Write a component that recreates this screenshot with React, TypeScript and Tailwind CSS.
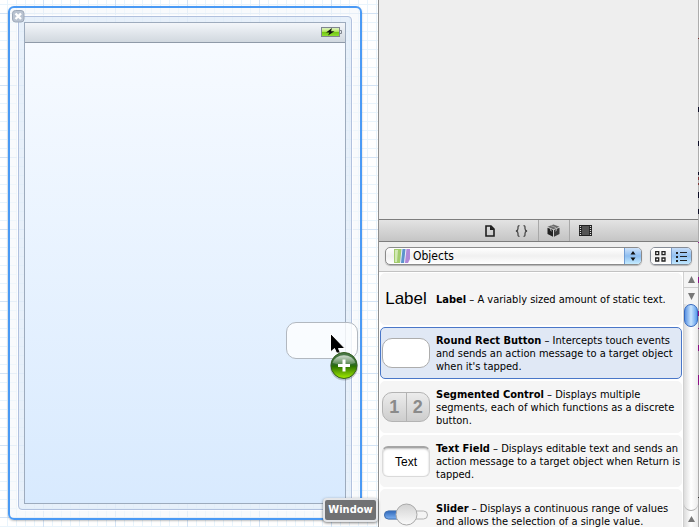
import React from "react";

const font = "font-['DejaVu_Sans_Condensed','DejaVu_Sans',sans-serif]";
const helvetica = "font-['Liberation_Sans',Arial,sans-serif]";

function Battery() {
  return (
    <svg width="21" height="10" viewBox="0 0 21 10" aria-label="Battery charging">
      <defs>
        <linearGradient id="bat" x1="0" y1="0" x2="0" y2="1">
          <stop offset="0" stopColor="#d9f5a8" />
          <stop offset="0.45" stopColor="#a5e04c" />
          <stop offset="0.5" stopColor="#74c913" />
          <stop offset="1" stopColor="#8fdd32" />
        </linearGradient>
      </defs>
      <rect x="0.5" y="0.5" width="18" height="9" fill="#d5edb4" stroke="#80868f" />
      <rect x="1" y="2" width="17" height="7" fill="url(#bat)" />
      <path d="M19 3.500h1.500v3h-1.500" fill="none" stroke="#80868f" />
      <path d="M11 1L5 5.500h3.500L7 8.500l6.500-4.200H10z" fill="#111" />
    </svg>
  );
}

function CloseBadge() {
  return (
    <svg width="13" height="13" viewBox="0 0 13 13">
      <rect x="0.5" y="0.5" width="11.5" height="11.5" rx="3" fill="#b9c3d1" stroke="#9da8b8" />
      <path d="M3.500 3.500l5.500 5.500M9 3.500l-5.500 5.500" stroke="#fff" strokeWidth="2.400" />
    </svg>
  );
}

function Cursor() {
  return (
    <svg width="18" height="21" viewBox="0 0 18 21">
      <path d="M1.500 0.500v18.500l4-3.500 2 4.500h4l-2-4.500h6.500z" fill="#000" stroke="#fff" strokeWidth="1" />
    </svg>
  );
}

function PlusBadge() {
  return (
    <svg width="30" height="30" viewBox="0 0 30 30">
      <defs>
        <linearGradient id="plus" x1="0" y1="0" x2="0" y2="1">
          <stop offset="0" stopColor="#4c7a4c" />
          <stop offset="0.48" stopColor="#2d6a22" />
          <stop offset="0.52" stopColor="#2a7000" />
          <stop offset="1" stopColor="#a4ee00" />
        </linearGradient>
        <linearGradient id="gloss" x1="0" y1="0" x2="0" y2="1">
          <stop offset="0" stopColor="#fff" stopOpacity="0.750" />
          <stop offset="1" stopColor="#fff" stopOpacity="0.150" />
        </linearGradient>
      </defs>
      <circle cx="15" cy="15.500" r="14" fill="#000" opacity="0.200" />
      <circle cx="15" cy="14.500" r="13" fill="url(#plus)" stroke="#35601f" />
      <path d="M3.500 12a12 11 0 0 1 23 0q-11.500 4-23 0z" fill="url(#gloss)" />
      <path d="M15 8.500v12M9 14.500h12" stroke="#fff" strokeWidth="3" />
    </svg>
  );
}

function Canvas() {
  return (
    <main className="relative flex min-w-0 flex-1 bg-white bg-[linear-gradient(to_right,#d3e3f5_1px,transparent_1px),linear-gradient(to_bottom,#d3e3f5_1px,transparent_1px),linear-gradient(to_right,#e9f4fc_1px,transparent_1px),linear-gradient(to_bottom,#e9f4fc_1px,transparent_1px)] bg-size-[72px_72px,72px_72px,9px_9px,9px_9px] bg-position-[43px_0,0_13px,7px_0,0_4px] pt-1.5 pr-4 pb-[7px] pl-2">
      <div className="relative flex flex-1 rounded-md border-2 border-[#4a9af5] bg-[#f4f6fa]/60 p-2 shadow-[0_1px_2px_rgba(0,0,0,0.25)]">
        <div className="flex flex-1 rounded border border-[#b1c1de] bg-[#d6e5f7]/50 p-[5px] shadow-[0_0_0_1px_rgba(255,255,255,0.8)]">
          <section
            aria-label="Window preview"
            className="flex flex-1 flex-col border border-[#9dabbd] bg-linear-to-b from-[#f8fbff] to-[#d8eafe]"
          >
            <header className="flex h-5 items-center justify-end border-b border-[#8f9aa8] bg-linear-to-b from-[#f3f6fa] to-[#d1d8df] pr-[3px] pb-px">
              <Battery />
            </header>
          </section>
        </div>
        <div className="absolute top-0.5 left-0.5">
          <CloseBadge />
        </div>
      </div>
      <div className="absolute top-[322px] left-[286px] h-[37px] w-[72px] rounded-[10px] border border-[#b2b8c0] bg-white/80" />
      <div className="absolute top-[333px] left-[329px]">
        <Cursor />
      </div>
      <div className="absolute top-[351px] left-[329px]">
        <PlusBadge />
      </div>
      <div className="absolute right-0 bottom-[5px] flex h-6 w-[55px] items-center justify-center rounded border-2 border-[#e4e6e9] bg-[#707173] text-[11px] font-bold text-white shadow-[0_1px_3px_rgba(0,0,0,0.5)]">
        Window
      </div>
    </main>
  );
}

function LibraryTabs() {
  return (
    <nav aria-label="Libraries" className="flex h-[23px] shrink-0 items-stretch justify-center border-y border-[#7d7d7d] bg-linear-to-b from-[#e3e3e3] to-[#c5c5c5] pr-0.5">
      <button aria-label="File templates" className="grid w-8 place-items-center">
        <svg width="10" height="12" viewBox="0 0 10 12">
          <path d="M1 1h5l3 3v7H1z" fill="none" stroke="#1e1e1e" strokeWidth="1.600" />
          <path d="M5 .5L9.500 5H5z" fill="#1e1e1e" />
        </svg>
      </button>
      <button aria-label="Code snippets" className="grid w-8 place-items-center">
        <svg width="13" height="12" viewBox="0 0 13 12" fill="none" stroke="#4a4a4a" strokeWidth="1.300">
          <path d="M4.500.7C2.800.7 3 1.700 3 3.500S2.600 5.700 1 6c1.600.3 2 .7 2 2.500s-.2 2.800 1.500 2.800M8.500.7c1.700 0 1.500 1 1.500 2.800S10.400 5.700 12 6c-1.600.3-2 .7-2 2.500s.2 2.800-1.500 2.800" />
        </svg>
      </button>
      <button aria-label="Objects" className="grid w-8 place-items-center border-x border-[#a8a8a8] bg-linear-to-b from-[#dedede] to-[#c3c3c3]">
        <svg width="13" height="13" viewBox="0 0 13 13">
          <path d="M6.500.5l6 2.300-6 2.500-6-2.500z" fill="#6a6a6a" />
          <path d="M.5 3.700L6 6v6.700L.5 10z" fill="#222" />
          <path d="M12.500 3.700L7 6v6.700L12.500 10z" fill="#3a3a3a" />
          <path d="M3.500 4v2.500l1.500.6M9.500 4v2.500l-1.500.6M4 1.700l5 2" fill="none" stroke="#bbb" strokeWidth=".7" />
        </svg>
      </button>
      <button aria-label="Media" className="grid w-8 place-items-center">
        <svg width="13" height="11" viewBox="0 0 13 11">
          <path d="M0 0h13v11H0z" fill="#222" />
          <path d="M3 1h7v9H3z" fill="#555" />
          <path d="M1.500 1v10M11.500 1v10" stroke="#ddd" strokeWidth="1.200" strokeDasharray="1 1" />
        </svg>
      </button>
    </nav>
  );
}

function FilterBar() {
  return (
    <div className="flex h-[30px] shrink-0 items-center gap-2 border-b border-[#c2c2c2] bg-[#eee] px-1.5 pb-px">
      <div className="relative flex h-[18px] flex-1 overflow-hidden rounded-[5px] border border-[#8b8b8b] bg-linear-to-b from-white via-[#f0f0f0] to-white shadow-[0_1px_1px_rgba(0,0,0,0.25)]">
        <select aria-label="Library" className="h-4 w-full appearance-none bg-transparent pl-[27px] text-[12px] leading-4 text-black outline-none">
          <option>Objects</option>
        </select>
        <svg className="pointer-events-none absolute top-0 left-2" width="16" height="16" viewBox="0 0 16 16">
          <path d="M0 1h8L7 15H0z" fill="#a3cc6e" />
          <path d="M1 2h3L3 14H1z" fill="#d2e9b4" />
          <path d="M8 1h4l-1 14H6z" fill="#5c93cd" />
          <path d="M12 1h4v10l-2 4h-4z" fill="#b189d8" />
          <path d="M8 1L6.500 15M12 1l-1.500 14" stroke="#e5edf7" />
        </svg>
        <span className="pointer-events-none absolute top-0 right-0 grid h-4 w-[17px] place-items-center border-l border-[#6f9bd2] bg-linear-to-b from-[#cfe3fa] via-[#8dbdf0] to-[#c5ecff]">
          <svg width="6" height="10" viewBox="0 0 6 10">
            <path d="M3 0l2.500 3.500h-5zM3 10L.5 6.500h5z" fill="#111" />
          </svg>
        </span>
      </div>
      <div className="flex h-[18px] w-[42px] overflow-hidden rounded-[5px] border border-[#858b95] shadow-[0_1px_1px_rgba(0,0,0,0.25)]">
        <button aria-label="Icon view" className="grid flex-1 place-items-center bg-linear-to-b from-white via-[#efefef] to-white">
          <svg width="11" height="11" viewBox="0 0 11 11" fill="none" stroke="#222">
            <path d="M.7 .7h3v3h-3zM7 .7h3v3h-3zM.7 7h3v3h-3zM7 7h3v3h-3z" strokeWidth="1.300" />
          </svg>
        </button>
        <button aria-label="List view" aria-pressed="true" className="grid flex-1 place-items-center border-l border-[#7c9cc8] bg-linear-to-b from-[#c5dcf8] via-[#92c0f1] to-[#c0e8ff]">
          <svg width="11" height="11" viewBox="0 0 11 11">
            <path d="M0 1h2v2H0zM0 5h2v2H0zM0 9h2v2H0z" fill="#222" />
            <path d="M4 1.500h7M4 5.500h7M4 9.500h7" stroke="#222" />
          </svg>
        </button>
      </div>
    </div>
  );
}

interface Item {
  name: string;
  text: string;
  art: React.ReactNode;
  selected?: boolean;
}

const items: Item[] = [
  {
    name: "Label",
    text: "A variably sized amount of static text.",
    art: <span className={`${helvetica} text-[17px] leading-5`}>Label</span>,
  },
  {
    name: "Round Rect Button",
    text: "Intercepts touch events\nand sends an action message to a target object\nwhen it's tapped.",
    selected: true,
    art: <span className="h-[30px] w-12 rounded-[10px] border border-[#adadad] bg-white" />,
  },
  {
    name: "Segmented Control",
    text: "Displays multiple\nsegments, each of which functions as a discrete\nbutton.",
    art: (
      <span className={`${helvetica} flex h-[30px] w-12 rounded-[10px] border border-[#b3b3b3] bg-linear-to-b from-[#ececec] to-[#cdcdcd] text-[18px] leading-7 font-bold text-[#8a8a8a]`}>
        <span className="flex-1 border-r border-[#b3b3b3] text-center">1</span>
        <span className="flex-1 text-center">2</span>
      </span>
    ),
  },
  {
    name: "Text Field",
    text: "Displays editable text and sends an\naction message to a target object when Return is\ntapped.",
    art: (
      <span className={`${helvetica} h-[31px] w-12 rounded-md border border-t-2 border-[#dadada] border-t-[#a5a5a5] bg-white text-center text-[12px] leading-7 shadow-[inset_0_1px_2px_rgba(0,0,0,0.25)]`}>
        Text
      </span>
    ),
  },
  {
    name: "Slider",
    text: "Displays a continuous range of values\nand allows the selection of a single value.",
    art: (
      <svg width="48" height="24" viewBox="0 0 48 24">
        <defs>
          <linearGradient id="track" x1="0" y1="0" x2="0" y2="1">
            <stop offset="0" stopColor="#2f68ba" />
            <stop offset="1" stopColor="#7fb2f2" />
          </linearGradient>
          <linearGradient id="knob" x1="0" y1="0" x2="0" y2="1">
            <stop offset="0" stopColor="#d2d2d2" />
            <stop offset="1" stopColor="#fbfbfb" />
          </linearGradient>
        </defs>
        <rect x="2.500" y="8" width="43" height="8" rx="4" fill="#f4f4f4" stroke="#b0b0b0" />
        <path d="M22 8H6.500a4 4 0 0 0 0 8H22z" fill="url(#track)" stroke="#4374b7" />
        <circle cx="24.500" cy="11.500" r="10.500" fill="url(#knob)" stroke="#a9a9a9" />
      </svg>
    ),
  },
];

function ItemRow({ item }: { item: Item }) {
  return (
    <li
      className={`flex h-[52px] shrink-0 items-center rounded-[5px] border ${
        item.selected ? "border-[#4a77c8] bg-[#e0e8f5]" : "border-[#f5f5f5] bg-[#f5f5f5]"
      }`}
    >
      <span className="grid w-[50px] shrink-0 place-items-center">{item.art}</span>
      <p className="pl-[5px] text-[11px] leading-[13px] whitespace-pre">
        <b>{item.name}</b> – {item.text}
      </p>
    </li>
  );
}

function ScrollBar() {
  return (
    <div className="flex w-[15px] shrink-0 flex-col border-l border-[#d0d0d0] bg-linear-to-r from-[#dcdcdc] via-white to-[#ececec]">
      <button aria-label="Scroll up" className="grid h-4 place-items-center border-b border-[#ccc] bg-[#f4f4f4]">
        <svg width="7" height="7" viewBox="0 0 7 7"><path d="M3.500 0L7 7H0z" fill="#777" /></svg>
      </button>
      <button aria-label="Scroll down" className="grid h-4 place-items-center bg-[#f4f4f4]">
        <svg width="7" height="7" viewBox="0 0 7 7"><path d="M0 0h7L3.500 7z" fill="#777" /></svg>
      </button>
      <div className="h-[23px] rounded-full border border-[#3568bd] bg-linear-to-r from-[#5b93e2] via-[#c8e4fd] to-[#5b9bea]" />
      <div className="flex-1 rounded-b-full border-b border-[#aaa]" />
      <button aria-label="Scroll to previous" className="grid h-4 place-items-center">
        <svg width="7" height="6" viewBox="0 0 7 6"><path d="M3.500 0L7 6H0z" fill="#777" /></svg>
      </button>
    </div>
  );
}

function EdgeSliver() {
  return (
    <svg className="h-full w-px shrink-0 bg-[#acacac]" width="1" height="527" shapeRendering="crispEdges">
      <path d="M.5 38v1M.5 177v3M.5 183v2" stroke="#7d3434" />
      <path d="M.5 107v5M.5 141v5M.5 172v3M.5 192v6M.5 209v5" stroke="#0b0b24" />
      <path d="M.5 242v1M.5 277v6M.5 311v5M.5 328v1M.5 345v6M.5 375v10" stroke="#8d0f86" />
      <path d="M.5 497v1" stroke="#333" />
    </svg>
  );
}

export default function App() {
  return (
    <div className={`${font} flex h-screen overflow-hidden bg-white text-black`}>
      <Canvas />
      <aside className="flex w-80 shrink-0 flex-col border-l border-[#8f8f8f] bg-[#eee]">
        <div className="h-[219px] shrink-0" />
        <LibraryTabs />
        <FilterBar />
        <div className="flex min-h-0 flex-1 bg-white">
          <ul className="flex min-w-0 flex-1 flex-col gap-0.5 overflow-hidden px-px pt-px">
            {items.map((item) => (
              <ItemRow key={item.name} item={item} />
            ))}
          </ul>
          <ScrollBar />
        </div>
      </aside>
      <EdgeSliver />
    </div>
  );
}
